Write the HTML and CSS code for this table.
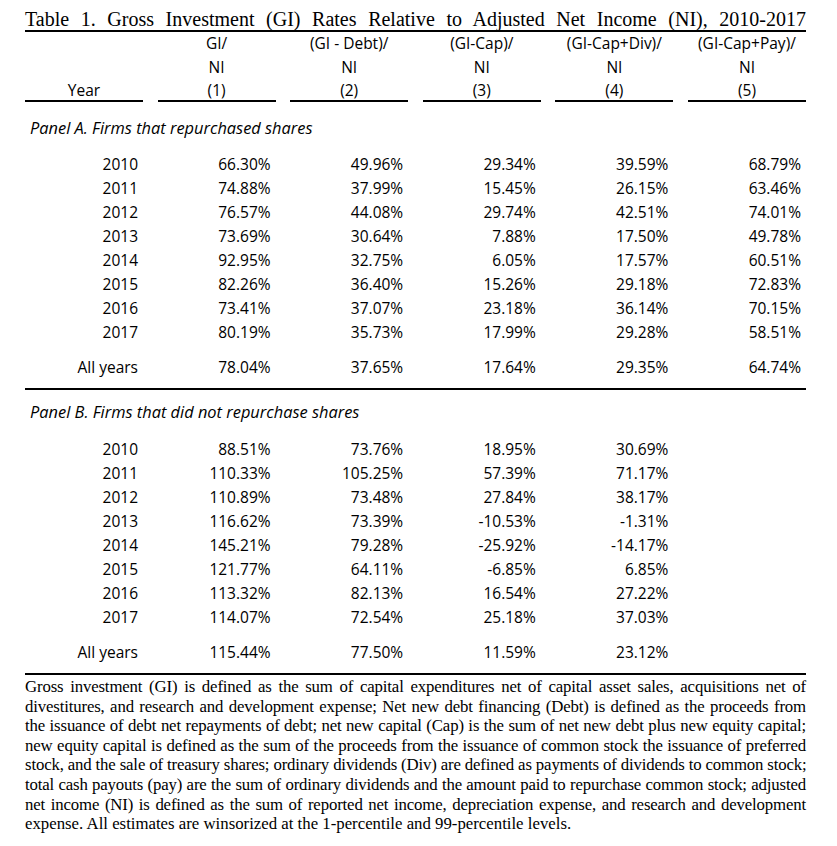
FILE: index.html
```html
<!DOCTYPE html>
<html>
<head>
<meta charset="utf-8">
<link rel="stylesheet" href="styles.css">
</head>
<body>
<div class="page">
  <div class="title">Table 1. Gross Investment (GI) Rates Relative to Adjusted Net Income (NI), 2010-2017</div>

  <div class="grid head">
    <div class="hcell">&nbsp;<br>&nbsp;<br>Year</div>
    <div class="hcell">GI/<br>NI<br>(1)</div>
    <div class="hcell">(GI - Debt)/<br>NI<br>(2)</div>
    <div class="hcell">(GI-Cap)/<br>NI<br>(3)</div>
    <div class="hcell">(GI-Cap+Div)/<br>NI<br>(4)</div>
    <div class="hcell">(GI-Cap+Pay)/<br>NI<br>(5)</div>
  </div>

  <div class="panel panel-a">
    <div class="panel-label">Panel A. Firms that repurchased shares</div>
    <div class="grid rows">
      <div>2010</div><div>66.30%</div><div>49.96%</div><div>29.34%</div><div>39.59%</div><div>68.79%</div>
      <div>2011</div><div>74.88%</div><div>37.99%</div><div>15.45%</div><div>26.15%</div><div>63.46%</div>
      <div>2012</div><div>76.57%</div><div>44.08%</div><div>29.74%</div><div>42.51%</div><div>74.01%</div>
      <div>2013</div><div>73.69%</div><div>30.64%</div><div>7.88%</div><div>17.50%</div><div>49.78%</div>
      <div>2014</div><div>92.95%</div><div>32.75%</div><div>6.05%</div><div>17.57%</div><div>60.51%</div>
      <div>2015</div><div>82.26%</div><div>36.40%</div><div>15.26%</div><div>29.18%</div><div>72.83%</div>
      <div>2016</div><div>73.41%</div><div>37.07%</div><div>23.18%</div><div>36.14%</div><div>70.15%</div>
      <div>2017</div><div>80.19%</div><div>35.73%</div><div>17.99%</div><div>29.28%</div><div>58.51%</div>
    </div>
    <div class="grid rows total">
      <div>All years</div><div>78.04%</div><div>37.65%</div><div>17.64%</div><div>29.35%</div><div>64.74%</div>
    </div>
  </div>

  <div class="panel panel-b">
    <div class="panel-label">Panel B. Firms that did not repurchase shares</div>
    <div class="grid rows">
      <div>2010</div><div>88.51%</div><div>73.76%</div><div>18.95%</div><div>30.69%</div><div></div>
      <div>2011</div><div>110.33%</div><div>105.25%</div><div>57.39%</div><div>71.17%</div><div></div>
      <div>2012</div><div>110.89%</div><div>73.48%</div><div>27.84%</div><div>38.17%</div><div></div>
      <div>2013</div><div>116.62%</div><div>73.39%</div><div>-10.53%</div><div>-1.31%</div><div></div>
      <div>2014</div><div>145.21%</div><div>79.28%</div><div>-25.92%</div><div>-14.17%</div><div></div>
      <div>2015</div><div>121.77%</div><div>64.11%</div><div>-6.85%</div><div>6.85%</div><div></div>
      <div>2016</div><div>113.32%</div><div>82.13%</div><div>16.54%</div><div>27.22%</div><div></div>
      <div>2017</div><div>114.07%</div><div>72.54%</div><div>25.18%</div><div>37.03%</div><div></div>
    </div>
    <div class="grid rows total">
      <div>All years</div><div>115.44%</div><div>77.50%</div><div>11.59%</div><div>23.12%</div><div></div>
    </div>
  </div>

  <div class="note">
    <div class="nl">Gross investment (GI) is defined as the sum of capital expenditures net of capital asset sales, acquisitions net of</div>
    <div class="nl">divestitures, and research and development expense; Net new debt financing (Debt) is defined as the proceeds from</div>
    <div class="nl">the issuance of debt net repayments of debt; net new capital (Cap) is the sum of net new debt plus new equity capital;</div>
    <div class="nl">new equity capital is defined as the sum of the proceeds from the issuance of common stock the issuance of preferred</div>
    <div class="nl">stock, and the sale of treasury shares; ordinary dividends (Div) are defined as payments of dividends to common stock;</div>
    <div class="nl">total cash payouts (pay) are the sum of ordinary dividends and the amount paid to repurchase common stock; adjusted</div>
    <div class="nl">net income (NI) is defined as the sum of reported net income, depreciation expense, and research and development</div>
    <div class="nl last">expense. All estimates are winsorized at the 1-percentile and 99-percentile levels.</div>
  </div>
</div>
</body>
</html>
```

FILE: styles.css
```css
html, body {
  margin: 0;
  padding: 0;
  background: #fff;
  color: #000;
}

.page {
  width: 781px;
  margin-left: 25px;
}

.title {
  font-family: "Liberation Serif", "Times New Roman", serif;
  font-size: 20px;
  line-height: 22px;
  padding-top: 8px;
  text-align: justify;
  text-align-last: justify;
  white-space: nowrap;
  border-bottom: 2px solid #000;
}

.grid {
  display: grid;
  grid-template-columns: repeat(6, 118px);
  column-gap: 14.6px;
  font-family: "Open Sans", "Noto Sans", sans-serif;
  font-size: 15.5px;
}

.hcell {
  text-align: center;
  line-height: 23.5px;
  height: 68px;
  border-bottom: 2px solid #000;
  white-space: nowrap;
}

.panel-label {
  font-family: "Open Sans", "Noto Sans", sans-serif;
  font-style: italic;
  font-size: 16.4px;
  line-height: 24px;
  padding-left: 5px;
}

.panel {
  border-bottom: 2px solid #000;
}

.panel-a {
  padding-top: 14px;
  padding-bottom: 9px;
}

.panel-b {
  padding-top: 10px;
  padding-bottom: 9px;
}

.panel-a .panel-label {
  margin-bottom: 12px;
}

.panel-b .panel-label {
  margin-bottom: 13px;
}

.rows > div {
  text-align: right;
  padding-right: 5px;
  line-height: 24px;
  white-space: nowrap;
}

.total {
  margin-top: 11px;
}

.note {
  font-family: "Liberation Serif", "Times New Roman", serif;
  font-size: 16.8px;
  line-height: 19.6px;
  padding-top: 2px;
}

.nl {
  text-align: justify;
  text-align-last: justify;
  white-space: nowrap;
  letter-spacing: -0.15px;
}

.nl.last {
  text-align-last: left;
  letter-spacing: 0;
}
```
